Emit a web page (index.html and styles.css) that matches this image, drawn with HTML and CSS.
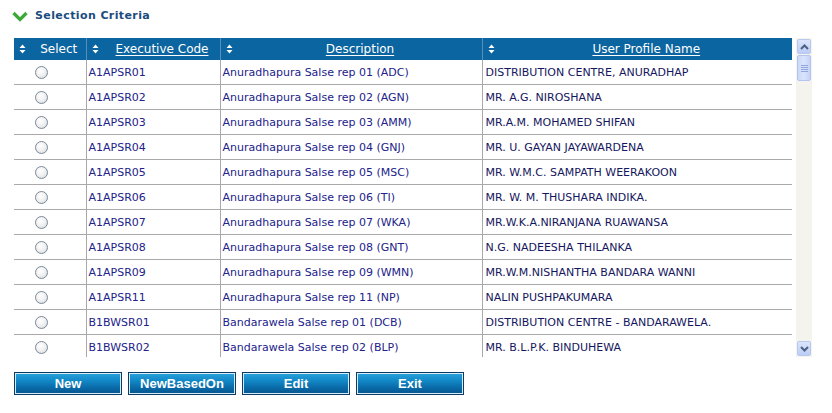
FILE: index.html
```html
<!DOCTYPE html>
<html>
<head>
<meta charset="utf-8">
<link rel="stylesheet" href="styles.css">
</head>
<body>
<div class="page">
  <div class="section-title">
    <svg class="chev" width="16" height="12" viewBox="0 0 16 12"><path d="M1.5 3 L8 9.5 L14.5 3" fill="none" stroke="#3aa935" stroke-width="3.2" stroke-linejoin="miter"/></svg>
    <span>Selection Criteria</span>
  </div>
  <div class="grid-area">
    <div class="grid-scroll">
      <table class="grid">
        <colgroup>
          <col class="c1"><col class="c2"><col class="c3"><col class="c4">
        </colgroup>
        <thead>
          <tr>
            <th><svg class="sort" width="7" height="10" viewBox="0 0 7 10"><path d="M3.5 0.5 L6.5 4 L0.5 4 Z M0.5 6 L6.5 6 L3.5 9.5 Z" fill="#ffffff"/></svg>Select</th>
            <th><svg class="sort" width="7" height="10" viewBox="0 0 7 10"><path d="M3.5 0.5 L6.5 4 L0.5 4 Z M0.5 6 L6.5 6 L3.5 9.5 Z" fill="#ffffff"/></svg><u>Executive Code</u></th>
            <th><svg class="sort" width="7" height="10" viewBox="0 0 7 10"><path d="M3.5 0.5 L6.5 4 L0.5 4 Z M0.5 6 L6.5 6 L3.5 9.5 Z" fill="#ffffff"/></svg><u>Description</u></th>
            <th><svg class="sort" width="7" height="10" viewBox="0 0 7 10"><path d="M3.5 0.5 L6.5 4 L0.5 4 Z M0.5 6 L6.5 6 L3.5 9.5 Z" fill="#ffffff"/></svg><u>User Profile Name</u></th>
          </tr>
        </thead>
        <tbody>
          <tr><td class="sel"><span class="radio"></span></td><td>A1APSR01</td><td>Anuradhapura Salse rep 01 (ADC)</td><td class="user">DISTRIBUTION CENTRE, ANURADHAP</td></tr>
          <tr><td class="sel"><span class="radio"></span></td><td>A1APSR02</td><td>Anuradhapura Salse rep 02 (AGN)</td><td class="user">MR. A.G. NIROSHANA</td></tr>
          <tr><td class="sel"><span class="radio"></span></td><td>A1APSR03</td><td>Anuradhapura Salse rep 03 (AMM)</td><td class="user">MR.A.M. MOHAMED SHIFAN</td></tr>
          <tr><td class="sel"><span class="radio"></span></td><td>A1APSR04</td><td>Anuradhapura Salse rep 04 (GNJ)</td><td class="user">MR. U. GAYAN JAYAWARDENA</td></tr>
          <tr><td class="sel"><span class="radio"></span></td><td>A1APSR05</td><td>Anuradhapura Salse rep 05 (MSC)</td><td class="user">MR. W.M.C. SAMPATH WEERAKOON</td></tr>
          <tr><td class="sel"><span class="radio"></span></td><td>A1APSR06</td><td>Anuradhapura Salse rep 06 (TI)</td><td class="user">MR. W. M. THUSHARA INDIKA.</td></tr>
          <tr><td class="sel"><span class="radio"></span></td><td>A1APSR07</td><td>Anuradhapura Salse rep 07 (WKA)</td><td class="user">MR.W.K.A.NIRANJANA RUAWANSA</td></tr>
          <tr><td class="sel"><span class="radio"></span></td><td>A1APSR08</td><td>Anuradhapura Salse rep 08 (GNT)</td><td class="user">N.G. NADEESHA THILANKA</td></tr>
          <tr><td class="sel"><span class="radio"></span></td><td>A1APSR09</td><td>Anuradhapura Salse rep 09 (WMN)</td><td class="user">MR.W.M.NISHANTHA BANDARA WANNI</td></tr>
          <tr><td class="sel"><span class="radio"></span></td><td>A1APSR11</td><td>Anuradhapura Salse rep 11 (NP)</td><td class="user">NALIN PUSHPAKUMARA</td></tr>
          <tr><td class="sel"><span class="radio"></span></td><td>B1BWSR01</td><td>Bandarawela Salse rep 01 (DCB)</td><td class="user">DISTRIBUTION CENTRE - BANDARAWELA.</td></tr>
          <tr><td class="sel"><span class="radio"></span></td><td>B1BWSR02</td><td>Bandarawela Salse rep 02 (BLP)</td><td class="user">MR. B.L.P.K. BINDUHEWA</td></tr>
        </tbody>
      </table>
    </div>
    <div class="vscroll">
      <div class="sb-btn"><svg width="9" height="6" viewBox="0 0 9 6"><path d="M1 5 L4.5 1.5 L8 5" fill="none" stroke="#4d6185" stroke-width="2"/></svg></div>
      <div class="sb-thumb"><span></span><span></span><span></span><span></span></div>
      <div class="sb-track"></div>
      <div class="sb-btn"><svg width="9" height="6" viewBox="0 0 9 6"><path d="M1 1 L4.5 4.5 L8 1" fill="none" stroke="#4d6185" stroke-width="2"/></svg></div>
    </div>
  </div>
  <div class="buttons">
    <button class="btn">New</button>
    <button class="btn">NewBasedOn</button>
    <button class="btn">Edit</button>
    <button class="btn">Exit</button>
  </div>
</div>
</body>
</html>
```
FILE: styles.css
```css
html, body {
  margin: 0;
  padding: 0;
  background: #ffffff;
}
body {
  font-family: "DejaVu Sans", Verdana, sans-serif;
  font-size: 11px;
}
.page {
  padding: 8px 0 0 14px;
  width: 800px;
}
.section-title {
  display: flex;
  align-items: center;
  gap: 7px;
  height: 15px;
  margin-left: -2px;
  color: #1b4c7e;
  font-weight: bold;
  font-size: 11px;
  letter-spacing: 0.4px;
}
.chev {
  display: block;
}
.grid-area {
  display: flex;
  margin-top: 15px;
  height: 319px;
  gap: 4px;
}
.grid-scroll {
  width: 778px;
  height: 319px;
  overflow: hidden;
}
.grid {
  border-collapse: collapse;
  table-layout: fixed;
  width: 778px;
}
.c1 { width: 72px; }
.c2 { width: 134px; }
.c3 { width: 262px; }
.c4 { width: 310px; }
.grid th {
  position: relative;
  background: #0b65a0;
  color: #ffffff;
  font-weight: normal;
  font-size: 12px;
  height: 22px;
  padding: 0 0 0 18px;
  text-align: center;
  border-left: 1px solid #5a90b8;
  white-space: nowrap;
}
.grid th:first-child { border-left: none; }
.grid th u {
  text-underline-offset: 2px;
}
.sort {
  position: absolute;
  left: 5px;
  top: 6px;
  display: block;
}
.grid td {
  height: 24px;
  padding: 0 0 0 2px;
  border: 1px solid #a9a9a9;
  border-top: none;
  color: #22228a;
  white-space: nowrap;
  overflow: hidden;
}
.grid td:first-child { border-left: none; }
.grid td.user {
  color: #161660;
  padding-left: 3px;
}
.grid td.sel {
  text-align: center;
  padding: 0;
}
.radio {
  display: inline-block;
  width: 11px;
  height: 11px;
  border-radius: 50%;
  border: 1px solid #7a8a9a;
  background: radial-gradient(circle at 40% 35%, #ffffff 0%, #f0f0f0 50%, #cfd3d8 100%);
  vertical-align: middle;
  margin-right: 16px;
}
.vscroll {
  width: 16px;
  height: 319px;
  display: flex;
  flex-direction: column;
  background: #f4f3ee;
}
.sb-btn {
  height: 13px;
  margin: 1px 1px;
  border: 1px solid #b8c8ee;
  border-radius: 2px;
  background: linear-gradient(#dbe5fb, #bccdf5);
  display: flex;
  align-items: center;
  justify-content: center;
}
.sb-thumb {
  height: 24px;
  margin: 0 1px;
  border: 1px solid #b3c4ee;
  border-radius: 2px;
  background: linear-gradient(90deg, #cbd8f8, #d9e3fb, #c3d2f6);
  display: flex;
  flex-direction: column;
  align-items: center;
  justify-content: center;
  gap: 1px;
}
.sb-thumb span {
  display: block;
  width: 7px;
  height: 1px;
  background: #8fa5dc;
}
.sb-track {
  flex: 1;
}
.buttons {
  display: flex;
  gap: 6px;
  margin-top: 15px;
}
.btn {
  width: 108px;
  height: 23px;
  padding: 0;
  border: 1px solid #0c3b63;
  box-shadow: inset 0 0 0 1px #d8ecf8;
  background: linear-gradient(#2aa2dc 0%, #138ac8 35%, #0a6aa8 70%, #05558c 100%);
  color: #ffffff;
  font-family: "Liberation Sans", Arial, sans-serif;
  font-weight: bold;
  font-size: 13px;
  line-height: 21px;
  white-space: nowrap;
}
```
